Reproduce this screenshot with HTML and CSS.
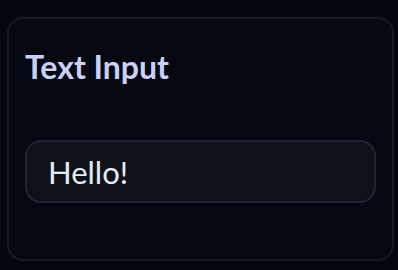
FILE: index.html
```html
<!DOCTYPE html>
<html lang="en">
<head>
<meta charset="UTF-8" />
<meta name="viewport" content="width=device-width, initial-scale=1" />
<title>Text Input</title>
<link rel="stylesheet" href="styles.css">
</head>
<body>

<div class="card">
  <h2 class="card-title">Text Input</h2>
  <input class="text-field" type="text" value="Hello!" />
</div>

</body>
</html>
```

FILE: styles.css
```css
body {
  margin: 0;
  background: #03060e;
  font-family: Lato, 'Noto Sans', sans-serif;
}

.card {
  box-sizing: border-box;
  margin: 17px 0 0 7px;
  width: 387px;
  height: 244px;
  padding: 24px 16px;
  background: #050810;
  border: 2px solid #151b27;
  border-radius: 16px;
}

.card-title {
  margin: 0 0 49px;
  font-size: 32px;
  font-weight: 700;
  line-height: 48px;
  color: #c9d1fb;
}

.text-field {
  box-sizing: border-box;
  display: block;
  width: 100%;
  height: 63px;
  padding: 0 21px;
  background: #0d111a;
  border: 2px solid #1e2636;
  border-radius: 16px;
  font-family: Lato, 'Noto Sans', sans-serif;
  font-size: 31px;
  color: #e6eaf2;
  outline: none;
}
```
